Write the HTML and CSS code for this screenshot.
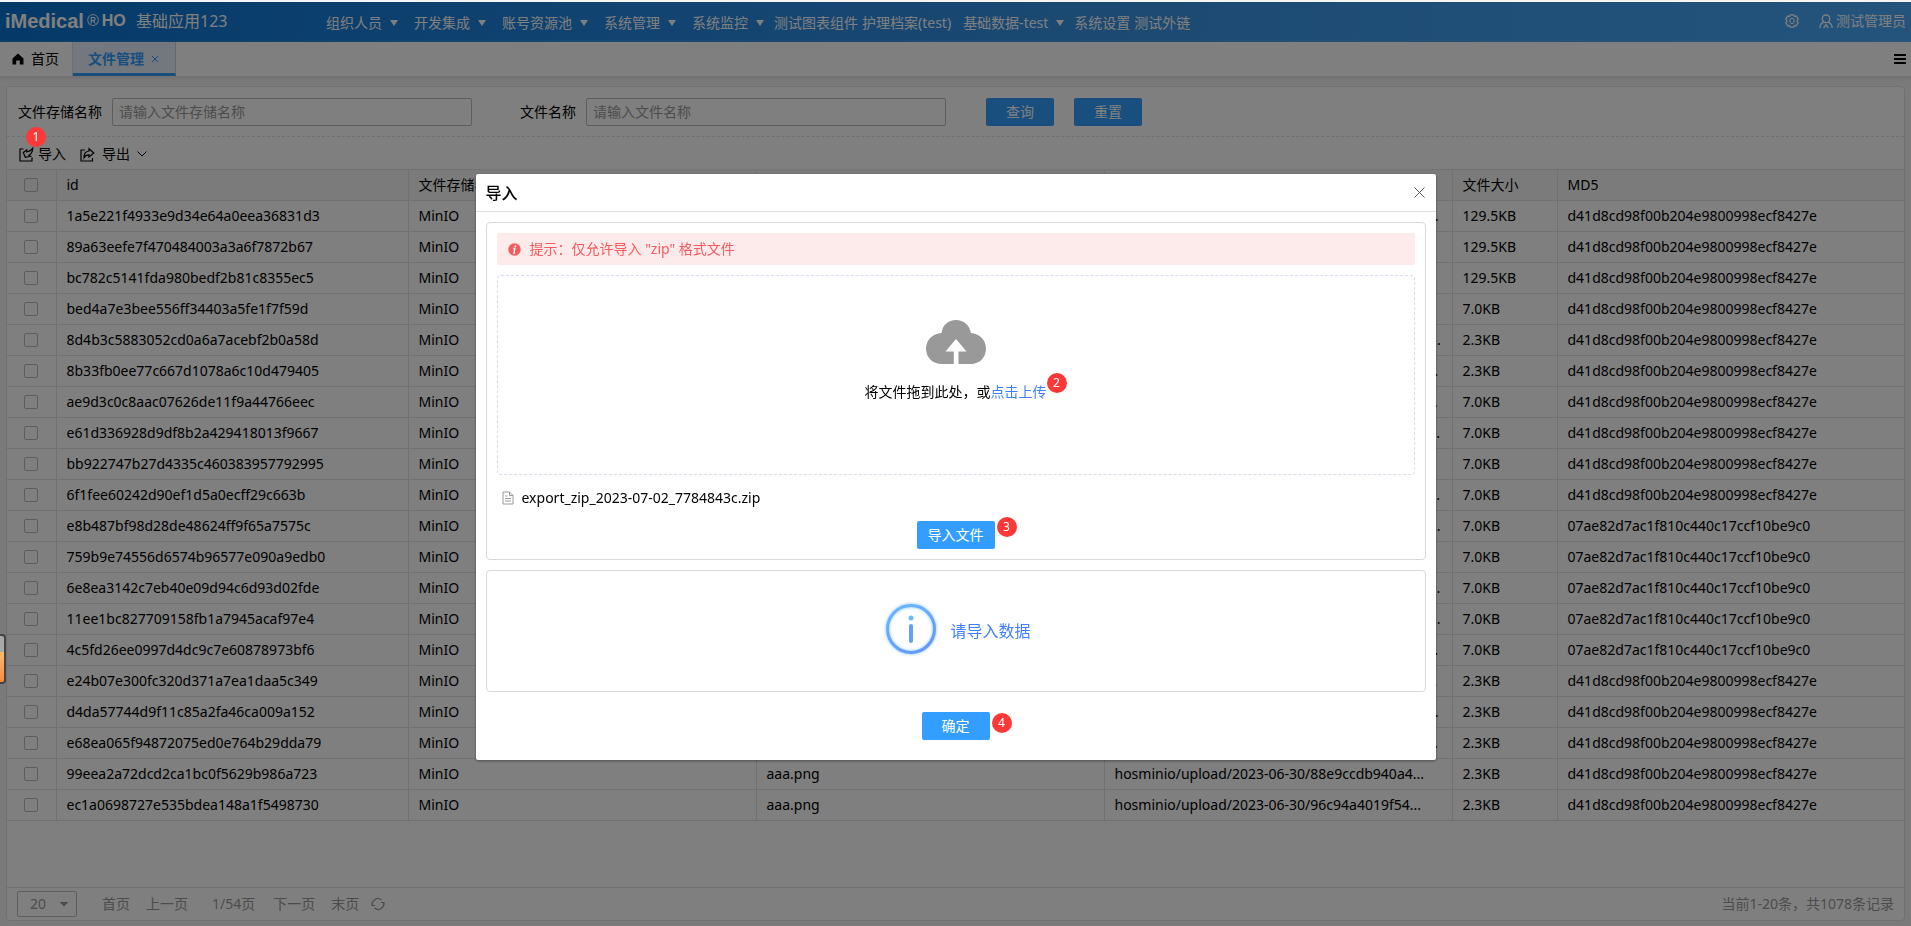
FILE: index.html
```html
<!DOCTYPE html>
<html lang="zh-CN">
<head>
<meta charset="utf-8">
<title>文件管理</title>
<link rel="stylesheet" href="styles.css">
</head>
<body>
<div class="page">
  <header class="topbar">
    <div class="brand"><span class="brand-name">iMedical</span><span class="brand-mark">®</span><span class="brand-suffix">HO</span></div>
    <div class="app-name">基础应用123</div>
    <nav class="menu">
      <a class="menu-item has-sub" href="#">组织人员</a>
      <a class="menu-item has-sub" href="#">开发集成</a>
      <a class="menu-item has-sub" href="#">账号资源池</a>
      <a class="menu-item has-sub" href="#">系统管理</a>
      <a class="menu-item has-sub tight" href="#">系统监控</a>
      <a class="menu-item" href="#">测试图表组件</a>
      <a class="menu-item wide" href="#">护理档案(test)</a>
      <a class="menu-item has-sub tight" href="#">基础数据-test</a>
      <a class="menu-item" href="#">系统设置</a>
      <a class="menu-item" href="#">测试外链</a>
    </nav>
    <div class="account">
      <button class="icon-btn" aria-label="设置">
        <svg width="14" height="14" viewBox="0 0 14 14" fill="none" stroke="currentColor"><path stroke-width="1.300" d="M5.200.8h3.600l.6 1.700 2-.3 1.800 2.900L12 7l1.200 1.900-1.800 2.900-2-.3-.6 1.700H5.200l-.6-1.700-2 .3L.8 8.900 2 7 .8 5.100l1.800-2.900 2 .3z"/><ellipse cx="7" cy="7" rx="2.200" ry="2.700"/></svg>
      </button>
      <a class="user" href="#">
        <svg width="14" height="15" viewBox="0 0 14 15" fill="none" stroke="currentColor" stroke-width="1.300"><path d="M7 1c2.300 0 3.700 1.500 3.700 3.700S9.200 8.700 7 8.700 3.300 6.900 3.300 4.700 4.700 1 7 1zM4.500 8.200C2.400 9.200 1 11 .8 14M9.500 8.200c2.100 1 3.500 2.800 3.700 5.800M4.600 14 7 10.700 9.400 14"/></svg>
        测试管理员</a>
    </div>
  </header>

  <div class="tabs">
    <a class="tab home" href="#">
      <svg width="12" height="12" viewBox="0 0 12 12"><path fill="currentColor" d="M6 .5 11.500 5.500V11.500H7.800V7.500H4.200V11.500H.5V5.500z"/></svg>
      首页</a>
    <div class="tab active"><span>文件管理</span>
      <button class="tab-close" aria-label="关闭"><svg width="8" height="8" viewBox="0 0 8 8" fill="none" stroke="currentColor"><path d="M1 1l6 6M7 1 1 7"/></svg></button>
    </div>
    <button class="tabs-menu" aria-label="菜单"><svg width="12" height="10" viewBox="0 0 12 10" fill="currentColor"><path d="M0 0h12v2H0zM0 4h12v2H0zM0 8h12v2H0z"/></svg></button>
  </div>

  <main class="panel">
    <form class="search">
      <label for="store">文件存储名称</label>
      <input id="store" class="field" type="text" placeholder="请输入文件存储名称">
      <label for="fname" class="second">文件名称</label>
      <input id="fname" class="field" type="text" placeholder="请输入文件名称">
      <button type="button" class="btn first">查询</button>
      <button type="button" class="btn">重置</button>
    </form>
    <div class="toolbar">
      <button class="tool">
        <svg width="15" height="15" viewBox="0 0 15 15" fill="none" stroke="currentColor" stroke-width="1.200"><path d="M4.500 2H1v12h12v-3.500"/><path d="M4.300 5.500 6.300 10.300 11.500 9.300 9.900 8.200C12 7 13.600 4.600 13.800 1.200 12.300 3.500 10.300 4.600 7.700 5V3z"/></svg>
        导入</button>
      <button class="tool export">
        <svg width="15" height="15" viewBox="0 0 15 15" fill="none" stroke="currentColor" stroke-width="1.200"><path d="M5 3H1v11h11.500v-3"/><path d="M9 1.800 13.800 6 9 10V7.800C6.800 7.600 5.300 8.500 4 10.800 4 6.800 5.800 4.300 9 4z"/></svg>
        <span>导出</span>
        <svg width="10" height="6" viewBox="0 0 10 6" fill="none" stroke="currentColor"><path d="M.5.5 5 5 9.500.5"/></svg>
      </button>
    </div>
    <table class="grid">
      <colgroup><col class="c-check"><col class="c-id"><col class="c-store"><col class="c-name"><col class="c-path"><col class="c-size"><col></colgroup>
      <thead><tr><th><input type="checkbox" aria-label="全选"></th><th>id</th><th>文件存储名称</th><th>文件名称</th><th>文件路径</th><th>文件大小</th><th>MD5</th></tr></thead>
      <tbody id="rows"></tbody>
    </table>
    <footer class="pager">
      <select class="page-size" aria-label="每页条数"><option>20</option></select>
      <a href="#">首页</a>
      <a href="#">上一页</a>
      <span class="page-now">1/54页</span>
      <a href="#">下一页</a>
      <a href="#" class="last">末页</a>
      <button class="icon-btn" aria-label="刷新"><svg width="14" height="14" viewBox="0 0 14 14" fill="none" stroke="currentColor" stroke-width="1.200"><path d="M1.500 8.500A5.500 5.500 0 0 1 10.500 3M12.500 5.500A5.500 5.500 0 0 1 3.500 11M1 5.500V8.500H4M13 8.500V5.500H10"/></svg></button>
      <span class="total">当前1-20条，共1078条记录</span>
    </footer>
  </main>
</div>

<div class="mask"></div>
<span class="badge step-one">1</span>
<div class="side-widget"></div>

<section class="modal" role="dialog" aria-labelledby="dlg-title">
  <header class="modal-head">
    <h2 id="dlg-title">导入</h2>
    <button class="modal-close" aria-label="关闭"><svg width="11" height="11" viewBox="0 0 11 11" fill="none" stroke="currentColor"><path d="M.5.5l10 10M10.500.5l-10 10"/></svg></button>
  </header>
  <div class="modal-body">
    <div class="box">
      <div class="alert">
        <svg width="13" height="13" viewBox="0 0 13 13"><circle cx="6.500" cy="6.500" r="6.200" fill="#f55b5f"/><circle cx="7.300" cy="3.300" r="1" fill="#fff"/><path d="M5.200 5.500h1.700L5.900 10h1.200" fill="none" stroke="#fff" stroke-width="1.300"/></svg>
        提示：仅允许导入 "zip" 格式文件</div>
      <div class="drop">
        <svg width="60" height="44" viewBox="0 0 60 44"><path fill="#999" fill-rule="evenodd" d="M15.500 13C16.500 5 22.500 0 30 0s13.500 5 15 13C53.500 13.500 60 20 60 28.500 60 37.500 53.500 44 45 44H32.500V31.500H40.500L30 19 19.500 31.500H27.800V44H16C6.500 44 0 37.500 0 28.500 0 20 6.500 13.500 15.500 13z"/></svg>
        <p>将文件拖到此处，或<a class="pick" href="#">点击上传<span class="badge at-link">2</span></a></p>
      </div>
      <div class="file">
        <svg width="12" height="14" viewBox="0 0 12 14" fill="none" stroke="#9a9a9a"><path d="M1 1h6.500L11 4.500V13H1zM7.500 1v3.500H11M3 5h2.500M3 7.500h6M3 10h6"/></svg>
        export_zip_2023-07-02_7784843c.zip</div>
      <div class="center"><button class="btn upload">导入文件<span class="badge at-btn">3</span></button></div>
    </div>
    <div class="box info">
      <svg width="60" height="60" viewBox="0 0 60 60">
        <defs>
          <linearGradient id="ring" x1="0" y1="0" x2=".6" y2="1"><stop offset="0" stop-color="#69baff"/><stop offset="1" stop-color="#6499fb"/></linearGradient>
          <filter id="glow" x="-20%" y="-20%" width="140%" height="140%"><feGaussianBlur stdDeviation="1.500"/></filter>
        </defs>
        <circle cx="31" cy="28" r="23.500" fill="none" stroke="#9fd0ff" stroke-width="4" filter="url(#glow)"/>
        <circle cx="31" cy="28" r="23.500" fill="none" stroke="url(#ring)" stroke-width="3"/>
        <circle cx="31" cy="17" r="2.500" fill="#69baff"/>
        <rect x="29" y="23" width="4" height="19" rx="2" fill="#659ffc"/>
      </svg>
      <span>请导入数据</span>
    </div>
    <div class="center actions"><button class="btn ok">确定<span class="badge at-ok">4</span></button></div>
  </div>
</section>
<script src="rows.js"></script>
</body>
</html>
```

FILE: rows.js
```js
const EMPTY = "d41d8cd98f00b204e9800998ecf8427e";
const FILLED = "07ae82d7ac1f810c440c17ccf10be9c0";
const data = [
  ["1a5e221f4933e9d34e64a0eea36831d3", "129.5KB", EMPTY],
  ["89a63eefe7f470484003a3a6f7872b67", "129.5KB", EMPTY],
  ["bc782c5141fda980bedf2b81c8355ec5", "129.5KB", EMPTY],
  ["bed4a7e3bee556ff34403a5fe1f7f59d", "7.0KB", EMPTY],
  ["8d4b3c5883052cd0a6a7acebf2b0a58d", "2.3KB", EMPTY],
  ["8b33fb0ee77c667d1078a6c10d479405", "2.3KB", EMPTY],
  ["ae9d3c0c8aac07626de11f9a44766eec", "7.0KB", EMPTY],
  ["e61d336928d9df8b2a429418013f9667", "7.0KB", EMPTY],
  ["bb922747b27d4335c460383957792995", "7.0KB", EMPTY],
  ["6f1fee60242d90ef1d5a0ecff29c663b", "7.0KB", EMPTY],
  ["e8b487bf98d28de48624ff9f65a7575c", "7.0KB", FILLED],
  ["759b9e74556d6574b96577e090a9edb0", "7.0KB", FILLED],
  ["6e8ea3142c7eb40e09d94c6d93d02fde", "7.0KB", FILLED],
  ["11ee1bc827709158fb1a7945acaf97e4", "7.0KB", FILLED],
  ["4c5fd26ee0997d4dc9c7e60878973bf6", "7.0KB", FILLED],
  ["e24b07e300fc320d371a7ea1daa5c349", "2.3KB", EMPTY],
  ["d4da57744d9f11c85a2fa46ca009a152", "2.3KB", EMPTY],
  ["e68ea065f94872075ed0e764b29dda79", "2.3KB", EMPTY],
  ["99eea2a72dcd2ca1bc0f5629b986a723", "2.3KB", EMPTY, "88e9ccdb940a4..."],
  ["ec1a0698727e535bdea148a1f5498730", "2.3KB", EMPTY, "96c94a4019f54..."]
];
document.getElementById("rows").innerHTML = data.map(([id, size, md5, file]) => `<tr>
  <td><input type="checkbox" aria-label="${id}"></td><td>${id}</td><td>MinIO</td><td>aaa.png</td>
  <td>hosminio/upload/2023-06-30/${file || id}</td><td>${size}</td><td>${md5}</td></tr>`).join("");
```

FILE: styles.css
```css
* { box-sizing: border-box; }
body {
  margin: 0;
  font: 14px/20px "Noto Sans", "Noto Sans CJK SC", sans-serif;
  color: #000;
  background: #fff;
}
button, input, select { font: inherit; color: inherit; margin: 0; }
button { border: 0; padding: 0; background: none; }
a { color: inherit; text-decoration: none; }
svg { display: block; flex: none; }

.page {
  display: flex;
  flex-direction: column;
  min-height: 100vh;
  padding-top: 2px;
  background: #f5f5f5;
}

.topbar {
  display: flex;
  align-items: center;
  height: 40px;
  padding: 0 5px 2px;
  color: #fff;
  background: linear-gradient(90deg, #0a74d0, #2286e2 30%, #3894e4 60%, #48a8f8);
}
.brand {
  display: flex;
  align-items: center;
  width: 131px;
  font-family: "Liberation Sans", sans-serif;
  font-weight: bold;
}
.brand-name { font-size: 20px; }
.brand-mark { padding: 0 3px; font-size: 16px; font-weight: normal; }
.brand-suffix { font-size: 16px; }
.app-name { width: 190px; font-size: 16px; }
.menu { display: flex; gap: 4px; padding-top: 4px; }
.menu-item { display: flex; align-items: center; white-space: nowrap; }
.has-sub { padding-right: 12px; }
.has-sub::after {
  content: "";
  margin-left: 8px;
  border: 4px solid transparent;
  border-top: 6px solid #fff;
  border-bottom: 0;
}
.tight { padding-right: 6px; }
.wide { padding-right: 8px; }
.account { display: flex; align-items: center; gap: 20px; margin-left: auto; }
.user { display: flex; align-items: center; gap: 3px; }

.tabs {
  display: flex;
  height: 35px;
  background: #fff;
  border-bottom: 1px solid #e2e2e2;
  box-shadow: 0 2px 4px #e4e4e4;
}
.tab { display: flex; align-items: center; }
.home { gap: 7px; width: 73px; padding-left: 12px; border-right: 1px solid #ddd; }
.active {
  gap: 7px;
  padding: 3px 16px 0 15px;
  color: #339eff;
  font-weight: bold;
  background: #e4f1fc;
  border-right: 1px solid #ccc;
  border-bottom: 3px solid #339eff;
}
.tabs-menu { margin: 0 5px 0 auto; }

.panel {
  display: flex;
  flex-direction: column;
  flex: 1;
  margin: 9px 6px 5px;
  background: #fff;
  border: 1px solid #e2e2e2;
  border-radius: 4px;
}
.search {
  display: flex;
  align-items: center;
  height: 50px;
  padding: 0 11px;
  border-bottom: 1px dashed #ddd;
}
.field {
  width: 360px;
  height: 28px;
  margin-left: 10px;
  padding: 0 6px;
  background: #fff;
  border: 1px solid #bbb;
  border-radius: 2px;
}
.field::placeholder { color: #999; }
.second { margin-left: 48px; }
.btn {
  position: relative;
  height: 28px;
  padding: 0 20px;
  color: #fff;
  background: #339eff;
  border-radius: 2px;
}
.first { margin: 0 20px 0 40px; }

.toolbar { display: flex; align-items: center; gap: 14px; height: 32px; padding: 2px 12px 0; }
.tool { display: flex; align-items: center; gap: 4px; }
.export { gap: 7px; }

.grid { width: 100%; table-layout: fixed; border-collapse: collapse; }
.c-check { width: 49px; }
.c-id { width: 352px; }
.c-store, .c-name, .c-path { width: 348px; }
.c-size { width: 105px; }
.grid th, .grid td {
  height: 31px;
  padding: 0 10px;
  overflow: hidden;
  font-weight: normal;
  text-align: left;
  text-overflow: ellipsis;
  white-space: nowrap;
  border: 1px solid #e2e2e2;
}
.grid th { background: #f7f7f7; }
.grid th:first-child, .grid td:first-child { padding: 0; border-left: 0; }
.grid th:last-child, .grid td:last-child { border-right: 0; }
.grid input {
  display: block;
  appearance: none;
  width: 14px;
  height: 14px;
  margin: 0 auto;
  border: 1px solid #bbb;
  border-radius: 2px;
}

.pager {
  display: flex;
  align-items: center;
  height: 33px;
  margin-top: auto;
  padding: 0 10px;
  color: #999;
  border-top: 1px solid #e2e2e2;
}
.pager a { margin-right: 16px; }
.pager .page-now { margin: 0 18px 0 8px; }
.pager .last { margin-right: 12px; }
.page-size {
  appearance: none;
  width: 60px;
  height: 26px;
  margin-right: 25px;
  padding: 0 12px;
  background: linear-gradient(to bottom right, #999 50%, transparent 50%) 46px 10px / 4px 5px no-repeat,
    linear-gradient(to bottom left, #999 50%, transparent 50%) 42px 10px / 4px 5px no-repeat, #fff;
  border: 1px solid #bbb;
  border-radius: 2px;
}
.total { margin-left: auto; }

.mask { position: fixed; inset: 2px 0 0; background: rgba(0, 0, 0, 0.5); }

.badge {
  position: absolute;
  width: 20px;
  height: 20px;
  color: #fff;
  font-size: 12px;
  line-height: 20px;
  text-align: center;
  background: #fc3838;
  border-radius: 50%;
}
.step-one { left: 26px; top: 127px; }
.at-link { left: 100%; top: -9px; }
.at-btn { left: calc(100% + 2px); top: -4px; }
.at-ok { left: calc(100% + 2px); top: 1px; }

.side-widget {
  position: fixed;
  left: -6px;
  top: 634px;
  width: 12px;
  height: 50px;
  background: linear-gradient(#a8a8a8 35%, #ffb870 35%, #ff8a3c);
  border: 2px solid #444;
  border-radius: 4px;
}

.modal {
  position: fixed;
  left: 50%;
  top: 174px;
  width: 960px;
  margin-left: -480px;
  background: #fff;
  border-radius: 2px;
  box-shadow: 0 1px 3px rgba(0, 0, 0, 0.4);
}
.modal-head {
  display: flex;
  align-items: center;
  justify-content: space-between;
  height: 38px;
  padding: 0 11px 0 10px;
  border-bottom: 1px solid #ddd;
}
.modal-head h2 { margin: 0; font-size: 16px; font-weight: 500; }
.modal-close { color: #555; }
.modal-body { padding: 10px 10px 20px; }
.box { padding: 10px; border: 1px solid #d9d9d9; border-radius: 4px; }
.alert {
  display: flex;
  align-items: center;
  gap: 9px;
  height: 32px;
  padding: 0 11px;
  color: #f55b5f;
  background: #fdeaea;
  border-radius: 2px;
}
.drop {
  display: flex;
  flex-direction: column;
  align-items: center;
  height: 200px;
  margin-top: 10px;
  padding-top: 44px;
  border: 1px dashed #d6dfee;
  border-radius: 4px;
}
.drop p { margin: 18px 0 0; }
.pick { position: relative; color: #4080ff; }
.file { display: flex; align-items: center; gap: 8px; height: 46px; padding: 0 5px; }
.center { display: flex; justify-content: center; }
.upload { padding: 0 11px; }
.info {
  display: flex;
  align-items: center;
  justify-content: center;
  gap: 10px;
  height: 122px;
  margin-top: 10px;
  color: #4080ff;
  font-size: 16px;
}
.actions { margin-top: 20px; }
```
